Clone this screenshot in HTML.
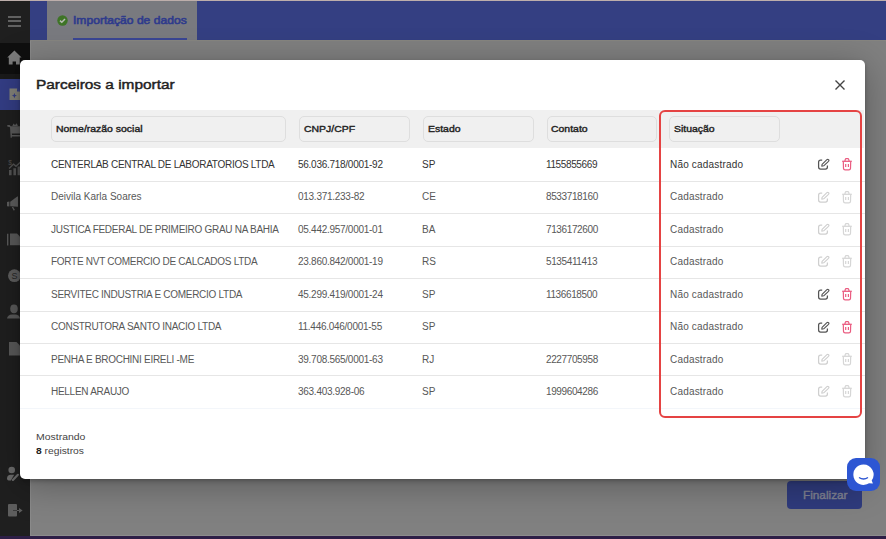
<!DOCTYPE html>
<html><head><meta charset="utf-8">
<style>
*{box-sizing:border-box;margin:0;padding:0}
html,body{width:886px;height:539px;overflow:hidden;background:#808080;font-family:"Liberation Sans",sans-serif}
.abs{position:absolute}
#topline{left:0;top:0;width:886px;height:1px;background:#bdaeab}
#side{left:0;top:1px;width:30px;height:535px;background:#1f1f1f}
#sideedge{left:30px;top:40px;width:1px;height:496px;background:#8a8a8a}
#hdr{left:30px;top:1px;width:856px;height:39px;background:#343f82}
#tab{left:47px;top:1px;width:150px;height:39px;background:#797a7f}
#tabtxt{left:73px;top:14px;font-size:11px;font-weight:400;color:#2f3b8c;white-space:nowrap;-webkit-text-stroke:0.6px #2f3b8c;transform:scaleX(1.1);transform-origin:0 0}
#tabline{left:73px;top:38px;width:114px;height:1.5px;background:#3a4694}
#homebg{left:0;top:42.5px;width:30px;height:31.5px;background:#0f0f0f}
#band{left:0;top:74px;width:30px;height:5px;background:#1a1a1a}
#activebg{left:0;top:79px;width:30px;height:31px;background:#343e86}
#bottombar{left:0;top:536px;width:886px;height:3px;background:#2d1e46}
.ham{left:8px;width:13px;height:2px;background:#616161}
.sic{fill:#5c5c5c}
#modal{left:20px;top:59.5px;width:845px;height:419px;background:#fff;border-radius:5px;box-shadow:0 2px 4px rgba(0,0,0,0.25),0 6px 36px rgba(0,0,0,0.3)}
#title{left:36px;top:76.6px;font-size:13px;font-weight:400;color:#222;white-space:nowrap;-webkit-text-stroke:0.45px #222;transform:scaleX(1.185);transform-origin:0 0}
#close{left:834px;top:79px;width:12px;height:12px}
#hband{left:20px;top:110px;width:844px;height:38px;background:#f0f0f0}
.hc{top:116px;height:26px;border:1px solid #dedede;border-radius:5px;background:#f0f0f0}
.ht{top:123px;font-size:9.5px;font-weight:400;color:#222;white-space:nowrap;-webkit-text-stroke:0.4px #222;transform:scaleX(1.1);transform-origin:0 0}
.sep{left:20px;width:845px;height:1px;background:#e6e6e6}
.row{font-size:10px;color:#333;white-space:nowrap;position:absolute}
.dis{color:#585858}
#redbox{left:659px;top:110px;width:203px;height:308px;border:2px solid #e54343;border-radius:6px}
#foot1{left:36px;top:431px;font-size:9.5px;color:#444;white-space:nowrap;transform:scaleX(1.1);transform-origin:0 0}
#foot2{left:36px;top:444.5px;font-size:9.5px;color:#444;white-space:nowrap;transform:scaleX(1.08);transform-origin:0 0}
#btn{left:787px;top:481px;width:75px;height:28px;background:#2f3b7d;border-radius:4px}
#btntxt{left:803px;top:489px;font-size:11px;font-weight:400;color:#808291;white-space:nowrap;-webkit-text-stroke:0.4px #808291;transform:scaleX(1.07);transform-origin:0 0}
#chat{left:847px;top:458.3px;width:33px;height:33px;background:#2d56d3;border-radius:9px}
</style></head><body>
<div class="abs" id="topline"></div>
<div class="abs" id="side"></div>
<div class="abs" id="hdr"></div>
<div class="abs" id="tab"></div>
<div class="abs" id="homebg"></div>
<div class="abs" id="band"></div>
<div class="abs" id="activebg"></div>
<div class="abs ham" style="top:16px"></div>
<div class="abs ham" style="top:20px"></div>
<div class="abs ham" style="top:25px"></div>
<!-- tab -->
<svg class="abs" style="left:57px;top:15px" width="11" height="11" viewBox="0 0 11 11"><circle cx="5.5" cy="5.5" r="5.2" fill="#3e7426"/><path d="M3 5.6 L4.8 7.3 L8 4" stroke="#b8bcb4" stroke-width="1.5" fill="none"/></svg>
<div class="abs" id="tabtxt">Importação de dados</div>
<div class="abs" id="tabline"></div>
<div class="abs" id="sideedge"></div>
<!-- sidebar icons -->
<svg class="abs" style="left:0;top:40px" width="30" height="496" viewBox="0 40 30 496">
 <path fill="#7c7c7c" d="M14.4 50.5 L21.6 57.6 L19.7 57.6 L19.7 64.6 L16 64.6 L16 61.4 L12.6 61.4 L12.6 64.6 L8.8 64.6 L8.8 57.6 L7.2 57.6 Z"/>
 <path fill="#84837a" d="M9.5 88.5 L17 88.5 L20 91.5 L20 100 L9.5 100 Z"/>
 <path fill="#343e86" d="M17 88.5 L17 91.5 L20 91.5 Z M14.4 93 L15.2 95 L17 95.6 L15.2 96.3 L14.4 98.3 L13.6 96.3 L11.8 95.6 L13.6 95 Z"/>
 <g fill="#5a5a5a">
  <path d="M7.3 125 L9.6 125 L10.8 126.2 L20 126.2 L20 133.6 L11.8 133.6 L12 135 L20 135 L20 136.6 L11.8 136.6 L11.8 137.8 L10.6 137.8 L10 127.2 L7.3 126.5 Z"/>
  <path d="M12.2 126.2 L13.5 123.5 L15 125 L16.8 123.2 L18 126.2 Z"/>
 </g>
 <g fill="#545454">
  <path d="M9 175.3 L9 170 L11.6 170 L11.6 175.3 Z M13.4 175.3 L13.4 168.2 L16 168.2 L16 175.3 Z M17.6 175.3 L17.6 166.4 L20 166.4 L20 175.3Z"/>
  <path d="M8.6 168 L13.5 163.2 L16 165.3 L20 161.5 L20 163.4 L16 167.2 L13.5 165.1 L9.6 169 Z"/>
  <text x="8.3" y="164.6" font-size="6.5" font-family="Liberation Sans" fill="#545454">$</text>
 </g>
 <g fill="#5e5e5e">
  <path d="M7 202 L9.4 201.6 L9.4 206.6 L7 206.2 Z"/>
  <path d="M10.2 201.8 L17.3 196.4 L18 196.4 L18 206.8 L10.2 206.2 Z"/>
  <path d="M11.8 207 L13.2 207 L15 210 L13.6 210.6 Z"/>
 </g>
 <g fill="#5a5a5a">
  <path d="M7 233.8 L8.4 233.8 L8.4 245.4 L7 245.4 Z"/>
  <path d="M10 233.5 L17 233.5 L20 236.5 L20 245.2 L10 245.2 Z"/>
 </g>
 <circle cx="14.4" cy="275.7" r="6.4" fill="#5e5e5e"/>
 <text x="11.6" y="279.2" font-size="9" fill="#262626" font-family="Liberation Sans">S</text>
 <g fill="#5a5a5a">
  <ellipse cx="14" cy="308.8" rx="3.8" ry="4.4"/>
  <path d="M7 318.6 Q7.5 314.6 12 314.4 L16 314.4 Q19.5 314.8 20 318.6 Z"/>
  <path d="M9 342 L16.5 342 L20 345.5 L20 355.4 L9 355.4 Z"/>
 </g>
 <g fill="#6a6a6a">
  <circle cx="11.7" cy="470" r="3.3"/>
  <path d="M7 478.4 Q7.2 474.9 10.6 474.8 L14.2 474.8 L10.9 480.4 L8.7 480.4 Q7 480.3 7 478.4 Z"/>
 </g>
 <path d="M12.9 479.9 L17.9 474.8" stroke="#6a6a6a" stroke-width="2.2" stroke-linecap="round"/>
 <g fill="#5e5e5e">
  <rect x="8" y="504" width="9" height="12.6" rx="1"/>
  <path d="M19 508 L22.6 510.5 L19 513 Z"/>
 </g>
 <path d="M13 510.5 L19.5 510.5" stroke="#3a3a3a" stroke-width="1"/>
 <path d="M17 510.5 L19.5 510.5" stroke="#5e5e5e" stroke-width="1"/>
</svg>
<div class="abs" style="left:30px;top:535px;width:856px;height:1px;background:#8c8c8c"></div>
<div class="abs" id="bottombar"></div>
<div class="abs" style="left:30px;top:40px;width:856px;height:1px;background:#868580"></div>
<!-- Finalizar -->
<div class="abs" id="btn"></div>
<div class="abs" id="btntxt">Finalizar</div>

<!-- modal -->
<div class="abs" id="modal"></div>
<div class="abs" id="title">Parceiros a importar</div>
<svg class="abs" id="close" viewBox="0 0 12 12"><path d="M1.5 1.5 L10.5 10.5 M10.5 1.5 L1.5 10.5" stroke="#444" stroke-width="1.4"/></svg>
<div class="abs" id="hband"></div>
<div class="abs hc" style="left:51px;width:235px"></div>
<div class="abs hc" style="left:299px;width:111px"></div>
<div class="abs hc" style="left:423px;width:111px"></div>
<div class="abs hc" style="left:547px;width:110px"></div>
<div class="abs hc" style="left:669px;width:111px"></div>
<div class="abs ht" style="left:56px">Nome/razão social</div>
<div class="abs ht" style="left:304px">CNPJ/CPF</div>
<div class="abs ht" style="left:428px">Estado</div>
<div class="abs ht" style="left:551px">Contato</div>
<div class="abs ht" style="left:674px">Situação</div>

<div id="rows">
<div class="abs sep" style="top:181px"></div>
<div class="abs sep" style="top:213px"></div>
<div class="abs sep" style="top:246px"></div>
<div class="abs sep" style="top:278px"></div>
<div class="abs sep" style="top:311px"></div>
<div class="abs sep" style="top:343px"></div>
<div class="abs sep" style="top:375px"></div>
<div class="abs sep" style="top:408px;background:#f3f6fa"></div>
<div class="row" style="top:159px;left:51px;letter-spacing:-0.28px">CENTERLAB CENTRAL DE LABORATORIOS LTDA</div>
<div class="row" style="top:159px;left:298px;letter-spacing:-0.27px">56.036.718/0001-92</div>
<div class="row" style="top:159px;left:422px">SP</div>
<div class="row" style="top:159px;left:546px;letter-spacing:-0.38px">1155855669</div>
<div class="row" style="top:159px;left:670px;letter-spacing:0.18px">Não cadastrado</div>
<svg class="abs" style="left:816px;top:158px" width="14" height="13" viewBox="0 -1 14 13"><path d="M6.2 1.2 L4.6 1.2 Q2.6 1.2 2.6 3.2 L2.6 8.1 Q2.6 10.1 4.6 10.1 L9.4 10.1 Q11.4 10.1 11.4 8.1 L11.4 6.6" stroke="#555" stroke-width="1.25" fill="none"/><path d="M5.8 7.1 L6.1 5.3 L10.9 0.7 A1.1 1.1 0 0 1 12.5 2.3 L7.7 6.8 Z" stroke="#555" stroke-width="1.15" fill="none" stroke-linejoin="round"/></svg>
<svg class="abs" style="left:841px;top:157px" width="12" height="14" viewBox="0 0 12 14"><path d="M1.2 4.3 L10.8 4.3" stroke="#ea5c80" stroke-width="1.3"/><path d="M3.9 4.1 L4.3 2.3 Q4.5 1.6 5.2 1.6 L6.8 1.6 Q7.5 1.6 7.7 2.3 L8.1 4.1" stroke="#ea5c80" stroke-width="1.2" fill="none"/><path d="M2.3 4.5 L2.5 11.4 Q2.6 12.9 4.1 12.9 L7.9 12.9 Q9.4 12.9 9.5 11.4 L9.7 4.5" stroke="#ea5c80" stroke-width="1.2" fill="none"/><path d="M4.7 7.1 L4.7 9.9 M7.4 7.1 L7.4 9.9" stroke="#ea5c80" stroke-width="1.2"/></svg>
<div class="row dis" style="top:191px;left:51px;letter-spacing:0.0px">Deivila Karla Soares</div>
<div class="row dis" style="top:191px;left:298px;letter-spacing:-0.27px">013.371.233-82</div>
<div class="row dis" style="top:191px;left:422px">CE</div>
<div class="row dis" style="top:191px;left:546px;letter-spacing:-0.38px">8533718160</div>
<div class="row dis" style="top:191px;left:670px;letter-spacing:0.18px">Cadastrado</div>
<svg class="abs" style="left:816px;top:191px" width="14" height="13" viewBox="0 -1 14 13"><path d="M6.2 1.2 L4.6 1.2 Q2.6 1.2 2.6 3.2 L2.6 8.1 Q2.6 10.1 4.6 10.1 L9.4 10.1 Q11.4 10.1 11.4 8.1 L11.4 6.6" stroke="#cfcfcf" stroke-width="1.25" fill="none"/><path d="M5.8 7.1 L6.1 5.3 L10.9 0.7 A1.1 1.1 0 0 1 12.5 2.3 L7.7 6.8 Z" stroke="#cfcfcf" stroke-width="1.15" fill="none" stroke-linejoin="round"/></svg>
<svg class="abs" style="left:841px;top:190px" width="12" height="14" viewBox="0 0 12 14"><path d="M1.2 4.3 L10.8 4.3" stroke="#d6d6d6" stroke-width="1.3"/><path d="M3.9 4.1 L4.3 2.3 Q4.5 1.6 5.2 1.6 L6.8 1.6 Q7.5 1.6 7.7 2.3 L8.1 4.1" stroke="#d6d6d6" stroke-width="1.2" fill="none"/><path d="M2.3 4.5 L2.5 11.4 Q2.6 12.9 4.1 12.9 L7.9 12.9 Q9.4 12.9 9.5 11.4 L9.7 4.5" stroke="#d6d6d6" stroke-width="1.2" fill="none"/><path d="M4.7 7.1 L4.7 9.9 M7.4 7.1 L7.4 9.9" stroke="#d6d6d6" stroke-width="1.2"/></svg>
<div class="row dis" style="top:224px;left:51px;letter-spacing:-0.28px">JUSTICA FEDERAL DE PRIMEIRO GRAU NA BAHIA</div>
<div class="row dis" style="top:224px;left:298px;letter-spacing:-0.27px">05.442.957/0001-01</div>
<div class="row dis" style="top:224px;left:422px">BA</div>
<div class="row dis" style="top:224px;left:546px;letter-spacing:-0.38px">7136172600</div>
<div class="row dis" style="top:224px;left:670px;letter-spacing:0.18px">Cadastrado</div>
<svg class="abs" style="left:816px;top:223px" width="14" height="13" viewBox="0 -1 14 13"><path d="M6.2 1.2 L4.6 1.2 Q2.6 1.2 2.6 3.2 L2.6 8.1 Q2.6 10.1 4.6 10.1 L9.4 10.1 Q11.4 10.1 11.4 8.1 L11.4 6.6" stroke="#cfcfcf" stroke-width="1.25" fill="none"/><path d="M5.8 7.1 L6.1 5.3 L10.9 0.7 A1.1 1.1 0 0 1 12.5 2.3 L7.7 6.8 Z" stroke="#cfcfcf" stroke-width="1.15" fill="none" stroke-linejoin="round"/></svg>
<svg class="abs" style="left:841px;top:222px" width="12" height="14" viewBox="0 0 12 14"><path d="M1.2 4.3 L10.8 4.3" stroke="#d6d6d6" stroke-width="1.3"/><path d="M3.9 4.1 L4.3 2.3 Q4.5 1.6 5.2 1.6 L6.8 1.6 Q7.5 1.6 7.7 2.3 L8.1 4.1" stroke="#d6d6d6" stroke-width="1.2" fill="none"/><path d="M2.3 4.5 L2.5 11.4 Q2.6 12.9 4.1 12.9 L7.9 12.9 Q9.4 12.9 9.5 11.4 L9.7 4.5" stroke="#d6d6d6" stroke-width="1.2" fill="none"/><path d="M4.7 7.1 L4.7 9.9 M7.4 7.1 L7.4 9.9" stroke="#d6d6d6" stroke-width="1.2"/></svg>
<div class="row dis" style="top:256px;left:51px;letter-spacing:-0.28px">FORTE NVT COMERCIO DE CALCADOS LTDA</div>
<div class="row dis" style="top:256px;left:298px;letter-spacing:-0.27px">23.860.842/0001-19</div>
<div class="row dis" style="top:256px;left:422px">RS</div>
<div class="row dis" style="top:256px;left:546px;letter-spacing:-0.38px">5135411413</div>
<div class="row dis" style="top:256px;left:670px;letter-spacing:0.18px">Cadastrado</div>
<svg class="abs" style="left:816px;top:255px" width="14" height="13" viewBox="0 -1 14 13"><path d="M6.2 1.2 L4.6 1.2 Q2.6 1.2 2.6 3.2 L2.6 8.1 Q2.6 10.1 4.6 10.1 L9.4 10.1 Q11.4 10.1 11.4 8.1 L11.4 6.6" stroke="#cfcfcf" stroke-width="1.25" fill="none"/><path d="M5.8 7.1 L6.1 5.3 L10.9 0.7 A1.1 1.1 0 0 1 12.5 2.3 L7.7 6.8 Z" stroke="#cfcfcf" stroke-width="1.15" fill="none" stroke-linejoin="round"/></svg>
<svg class="abs" style="left:841px;top:254px" width="12" height="14" viewBox="0 0 12 14"><path d="M1.2 4.3 L10.8 4.3" stroke="#d6d6d6" stroke-width="1.3"/><path d="M3.9 4.1 L4.3 2.3 Q4.5 1.6 5.2 1.6 L6.8 1.6 Q7.5 1.6 7.7 2.3 L8.1 4.1" stroke="#d6d6d6" stroke-width="1.2" fill="none"/><path d="M2.3 4.5 L2.5 11.4 Q2.6 12.9 4.1 12.9 L7.9 12.9 Q9.4 12.9 9.5 11.4 L9.7 4.5" stroke="#d6d6d6" stroke-width="1.2" fill="none"/><path d="M4.7 7.1 L4.7 9.9 M7.4 7.1 L7.4 9.9" stroke="#d6d6d6" stroke-width="1.2"/></svg>
<div class="row dis" style="top:289px;left:51px;letter-spacing:-0.28px">SERVITEC INDUSTRIA E COMERCIO LTDA</div>
<div class="row dis" style="top:289px;left:298px;letter-spacing:-0.27px">45.299.419/0001-24</div>
<div class="row dis" style="top:289px;left:422px">SP</div>
<div class="row dis" style="top:289px;left:546px;letter-spacing:-0.38px">1136618500</div>
<div class="row dis" style="top:289px;left:670px;letter-spacing:0.18px">Não cadastrado</div>
<svg class="abs" style="left:816px;top:288px" width="14" height="13" viewBox="0 -1 14 13"><path d="M6.2 1.2 L4.6 1.2 Q2.6 1.2 2.6 3.2 L2.6 8.1 Q2.6 10.1 4.6 10.1 L9.4 10.1 Q11.4 10.1 11.4 8.1 L11.4 6.6" stroke="#555" stroke-width="1.25" fill="none"/><path d="M5.8 7.1 L6.1 5.3 L10.9 0.7 A1.1 1.1 0 0 1 12.5 2.3 L7.7 6.8 Z" stroke="#555" stroke-width="1.15" fill="none" stroke-linejoin="round"/></svg>
<svg class="abs" style="left:841px;top:287px" width="12" height="14" viewBox="0 0 12 14"><path d="M1.2 4.3 L10.8 4.3" stroke="#ea5c80" stroke-width="1.3"/><path d="M3.9 4.1 L4.3 2.3 Q4.5 1.6 5.2 1.6 L6.8 1.6 Q7.5 1.6 7.7 2.3 L8.1 4.1" stroke="#ea5c80" stroke-width="1.2" fill="none"/><path d="M2.3 4.5 L2.5 11.4 Q2.6 12.9 4.1 12.9 L7.9 12.9 Q9.4 12.9 9.5 11.4 L9.7 4.5" stroke="#ea5c80" stroke-width="1.2" fill="none"/><path d="M4.7 7.1 L4.7 9.9 M7.4 7.1 L7.4 9.9" stroke="#ea5c80" stroke-width="1.2"/></svg>
<div class="row dis" style="top:321px;left:51px;letter-spacing:-0.28px">CONSTRUTORA SANTO INACIO LTDA</div>
<div class="row dis" style="top:321px;left:298px;letter-spacing:-0.27px">11.446.046/0001-55</div>
<div class="row dis" style="top:321px;left:422px">SP</div>
<div class="row dis" style="top:321px;left:670px;letter-spacing:0.18px">Não cadastrado</div>
<svg class="abs" style="left:816px;top:321px" width="14" height="13" viewBox="0 -1 14 13"><path d="M6.2 1.2 L4.6 1.2 Q2.6 1.2 2.6 3.2 L2.6 8.1 Q2.6 10.1 4.6 10.1 L9.4 10.1 Q11.4 10.1 11.4 8.1 L11.4 6.6" stroke="#555" stroke-width="1.25" fill="none"/><path d="M5.8 7.1 L6.1 5.3 L10.9 0.7 A1.1 1.1 0 0 1 12.5 2.3 L7.7 6.8 Z" stroke="#555" stroke-width="1.15" fill="none" stroke-linejoin="round"/></svg>
<svg class="abs" style="left:841px;top:320px" width="12" height="14" viewBox="0 0 12 14"><path d="M1.2 4.3 L10.8 4.3" stroke="#ea5c80" stroke-width="1.3"/><path d="M3.9 4.1 L4.3 2.3 Q4.5 1.6 5.2 1.6 L6.8 1.6 Q7.5 1.6 7.7 2.3 L8.1 4.1" stroke="#ea5c80" stroke-width="1.2" fill="none"/><path d="M2.3 4.5 L2.5 11.4 Q2.6 12.9 4.1 12.9 L7.9 12.9 Q9.4 12.9 9.5 11.4 L9.7 4.5" stroke="#ea5c80" stroke-width="1.2" fill="none"/><path d="M4.7 7.1 L4.7 9.9 M7.4 7.1 L7.4 9.9" stroke="#ea5c80" stroke-width="1.2"/></svg>
<div class="row dis" style="top:353.5px;left:51px;letter-spacing:-0.28px">PENHA E BROCHINI EIRELI -ME</div>
<div class="row dis" style="top:353.5px;left:298px;letter-spacing:-0.27px">39.708.565/0001-63</div>
<div class="row dis" style="top:353.5px;left:422px">RJ</div>
<div class="row dis" style="top:353.5px;left:546px;letter-spacing:-0.38px">2227705958</div>
<div class="row dis" style="top:353.5px;left:670px;letter-spacing:0.18px">Cadastrado</div>
<svg class="abs" style="left:816px;top:353px" width="14" height="13" viewBox="0 -1 14 13"><path d="M6.2 1.2 L4.6 1.2 Q2.6 1.2 2.6 3.2 L2.6 8.1 Q2.6 10.1 4.6 10.1 L9.4 10.1 Q11.4 10.1 11.4 8.1 L11.4 6.6" stroke="#cfcfcf" stroke-width="1.25" fill="none"/><path d="M5.8 7.1 L6.1 5.3 L10.9 0.7 A1.1 1.1 0 0 1 12.5 2.3 L7.7 6.8 Z" stroke="#cfcfcf" stroke-width="1.15" fill="none" stroke-linejoin="round"/></svg>
<svg class="abs" style="left:841px;top:352px" width="12" height="14" viewBox="0 0 12 14"><path d="M1.2 4.3 L10.8 4.3" stroke="#d6d6d6" stroke-width="1.3"/><path d="M3.9 4.1 L4.3 2.3 Q4.5 1.6 5.2 1.6 L6.8 1.6 Q7.5 1.6 7.7 2.3 L8.1 4.1" stroke="#d6d6d6" stroke-width="1.2" fill="none"/><path d="M2.3 4.5 L2.5 11.4 Q2.6 12.9 4.1 12.9 L7.9 12.9 Q9.4 12.9 9.5 11.4 L9.7 4.5" stroke="#d6d6d6" stroke-width="1.2" fill="none"/><path d="M4.7 7.1 L4.7 9.9 M7.4 7.1 L7.4 9.9" stroke="#d6d6d6" stroke-width="1.2"/></svg>
<div class="row dis" style="top:386px;left:51px;letter-spacing:-0.28px">HELLEN ARAUJO</div>
<div class="row dis" style="top:386px;left:298px;letter-spacing:-0.27px">363.403.928-06</div>
<div class="row dis" style="top:386px;left:422px">SP</div>
<div class="row dis" style="top:386px;left:546px;letter-spacing:-0.38px">1999604286</div>
<div class="row dis" style="top:386px;left:670px;letter-spacing:0.18px">Cadastrado</div>
<svg class="abs" style="left:816px;top:385px" width="14" height="13" viewBox="0 -1 14 13"><path d="M6.2 1.2 L4.6 1.2 Q2.6 1.2 2.6 3.2 L2.6 8.1 Q2.6 10.1 4.6 10.1 L9.4 10.1 Q11.4 10.1 11.4 8.1 L11.4 6.6" stroke="#cfcfcf" stroke-width="1.25" fill="none"/><path d="M5.8 7.1 L6.1 5.3 L10.9 0.7 A1.1 1.1 0 0 1 12.5 2.3 L7.7 6.8 Z" stroke="#cfcfcf" stroke-width="1.15" fill="none" stroke-linejoin="round"/></svg>
<svg class="abs" style="left:841px;top:384px" width="12" height="14" viewBox="0 0 12 14"><path d="M1.2 4.3 L10.8 4.3" stroke="#d6d6d6" stroke-width="1.3"/><path d="M3.9 4.1 L4.3 2.3 Q4.5 1.6 5.2 1.6 L6.8 1.6 Q7.5 1.6 7.7 2.3 L8.1 4.1" stroke="#d6d6d6" stroke-width="1.2" fill="none"/><path d="M2.3 4.5 L2.5 11.4 Q2.6 12.9 4.1 12.9 L7.9 12.9 Q9.4 12.9 9.5 11.4 L9.7 4.5" stroke="#d6d6d6" stroke-width="1.2" fill="none"/><path d="M4.7 7.1 L4.7 9.9 M7.4 7.1 L7.4 9.9" stroke="#d6d6d6" stroke-width="1.2"/></svg>
</div><!--endrows-->
<div class="abs" id="redbox"></div>

<div class="abs" id="foot1">Mostrando</div>
<div class="abs" id="foot2"><b style="color:#222">8</b> registros</div>

<div class="abs" id="chat"></div>
<svg class="abs" style="left:847px;top:458.3px" width="33" height="33" viewBox="0 0 33 33">
 <path d="M16.5 6.5 a10.2 10.2 0 1 0 5.5 18.8 L25.9 25.4 L24.7 22.6 A10.2 10.2 0 0 0 16.5 6.5Z" fill="#fff"/>
 <path d="M12 19.5 Q16.5 22.5 21 19.5" stroke="#2c55d2" stroke-width="1.3" fill="none"/>
</svg>

</body></html>
